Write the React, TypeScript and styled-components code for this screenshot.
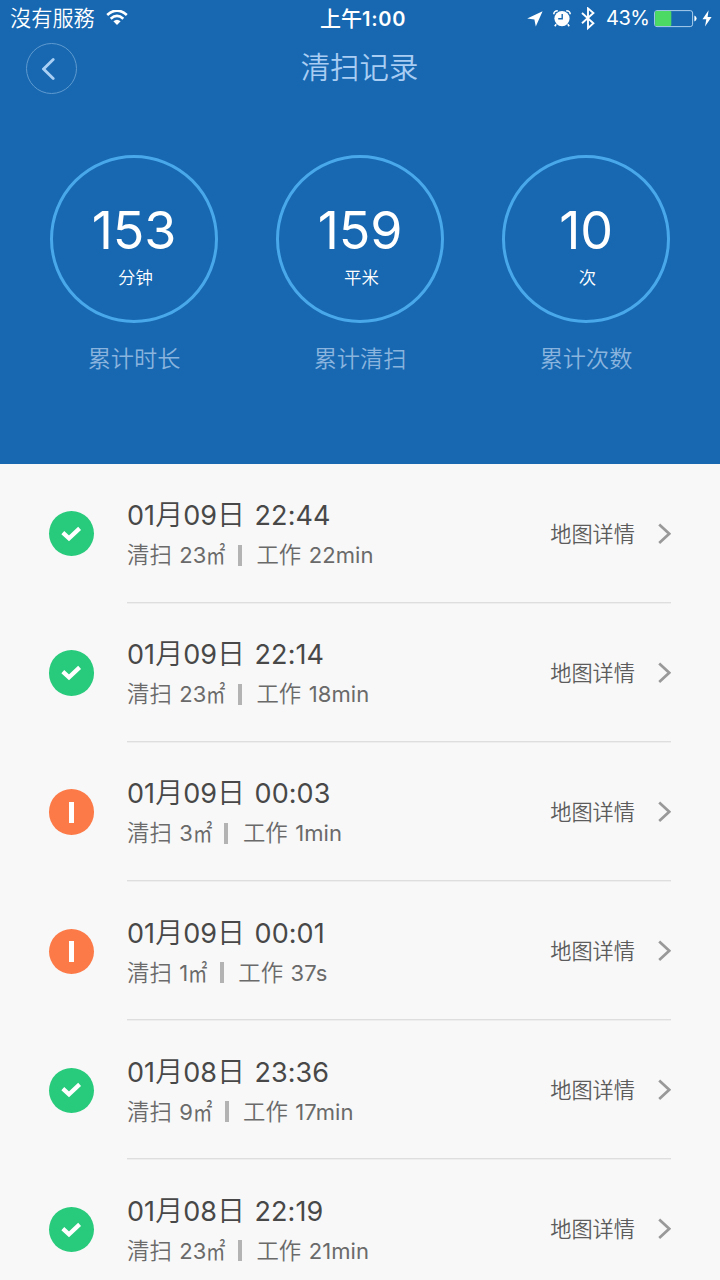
import React from "react";
import styled, { createGlobalStyle } from "styled-components";

const GlobalStyle = createGlobalStyle`
  * { box-sizing: border-box; }
  body {
    margin: 0;
    width: 720px;
    height: 1280px;
    overflow: hidden;
    background: #f8f8f8;
    font-family: Inter, "Noto Sans CJK SC", sans-serif;
  }
`;

const Screen = styled.main`
  width: 720px;
  height: 1280px;
  overflow: hidden;
  display: flex;
  flex-direction: column;
  background: #f8f8f8;
`;

const Header = styled.header`
  flex: none;
  height: 464px;
  background: #1768b1;
  color: #fff;
`;

const StatusBar = styled.div`
  height: 37px;
  padding: 0 8px 0 10px;
  display: grid;
  grid-template-columns: 310px 1fr 190px;
  align-items: center;
`;

const Carrier = styled.div`
  display: flex;
  align-items: center;
  gap: 11px;
  height: 34px;
  font-family: Inter, "Noto Sans CJK TC", sans-serif;
  font-size: 21.2px;
  line-height: 34px;
  font-weight: 350;
`;

const CarrierName = styled.span`
  margin-top: -2px;
`;

const Clock = styled.div`
  height: 36px;
  font-size: 20px;
  line-height: 35px;
  font-weight: 600;
  letter-spacing: 0.75px;
  white-space: nowrap;
`;

const ClockPrefix = styled.span`
  font-weight: 500;
  font-size: 21px;
  letter-spacing: 0;
`;

const StatusIcons = styled.div`
  display: flex;
  align-items: center;
  justify-content: flex-end;
`;

const Percent = styled.span`
  width: 43px;
  margin: 0 5px 0 11px;
  font-size: 20px;
  line-height: 35px;
  height: 36px;
  font-weight: 400;
  letter-spacing: -0.5px;
  white-space: nowrap;
`;

const NavBar = styled.nav`
  height: 63px;
  padding: 0 26px;
  display: grid;
  grid-template-columns: 51px 1fr 51px;
  align-items: center;
`;

const BackButton = styled.button`
  width: 51px;
  height: 51px;
  padding: 0 5px 0 0;
  border: 1px solid #5f9ad0;
  border-radius: 50%;
  background: none;
  display: grid;
  place-items: center;
`;

const Title = styled.h1`
  margin: -1px 0 0 -1px;
  text-align: center;
  font-size: 29.4px;
  line-height: 40px;
  font-weight: 350;
  color: #a9cdf3;
`;

const Stats = styled.section`
  display: grid;
  grid-template-columns: repeat(3, 226px);
  justify-content: center;
  padding-top: 55px;
`;

const Stat = styled.div`
  display: flex;
  flex-direction: column;
  align-items: center;
`;

const Ring = styled.div`
  width: 168px;
  height: 168px;
  border: 3px solid #48a8ea;
  border-radius: 50%;
  display: flex;
  flex-direction: column;
  align-items: center;
  padding-top: 43px;
`;

const StatValue = styled.div`
  font-size: 52px;
  line-height: 60px;
  height: 60px;
  font-weight: 400;
  letter-spacing: -0.2px;
`;

const StatUnit = styled.div`
  margin-top: 4px;
  padding-left: 3px;
  font-size: 17.4px;
  line-height: 26px;
  font-weight: 350;
`;

const StatLabel = styled.div`
  margin-top: 18px;
  font-size: 23.2px;
  line-height: 36px;
  font-weight: 350;
  color: #8ab4de;
`;

const List = styled.ul`
  list-style: none;
  margin: 0;
  padding: 0 49px;
`;

const Row = styled.li`
  height: 139.2px;
  display: grid;
  grid-template-columns: 78px 1fr;
`;

const Badge = styled.span<{ $ok: boolean }>`
  width: 45.4px;
  height: 45.4px;
  margin-top: 47px;
  margin-left: -0.4px;
  border-radius: 50%;
  background: ${(p) => (p.$ok ? "#28ca7b" : "#fc7a48")};
  display: grid;
  place-items: center;
`;

const RowBody = styled.div`
  height: 138.6px;
  display: flex;
  justify-content: space-between;
  border-bottom: 1.6px solid #dedede;
  box-shadow: 0 1px 0 #eeeeee;
`;

const Info = styled.div`
  padding-top: 32px;
  white-space: nowrap;
`;

const DateLine = styled.div`
  font-size: 27px;
  line-height: 38px;
  height: 38px;
  font-weight: 400;
  letter-spacing: 0.05px;
  word-spacing: 1.8px;
  color: #484848;
`;

const DateUnit = styled.span`
  font-size: 28px;
  font-weight: 350;
`;

const Meta = styled.div`
  margin-top: 5px;
  height: 32px;
  display: flex;
  align-items: center;
  font-size: 22px;
  line-height: 32px;
  font-weight: 400;
  letter-spacing: 0.1px;
  color: #6a6a6a;
`;

const Cjk = styled.span`
  font-size: 22.4px;
  font-weight: 350;
  letter-spacing: 0;
  margin-right: 7.4px;
`;

const SquareMeter = styled.span`
  width: 22px;
  font-size: 22px;
  font-weight: 400;
  transform: scale(0.88, 1.08);
  transform-origin: left center;
`;

const Bar = styled.span`
  width: 4px;
  height: 21px;
  margin: 0 14.5px 0 9.6px;
  background: #b3b3b3;
`;

const Detail = styled.a`
  height: 139px;
  display: flex;
  align-items: center;
  gap: 23px;
  font-size: 21.2px;
  font-weight: 350;
  color: #5c5c5c;
`;

const DetailText = styled.span`
  margin: -3px 0 0 0;
`;

const WifiIcon = () => (
  <svg width="22" height="17" viewBox="0 0 22 17" fill="none" stroke="#fff" strokeWidth="2.7">
    <path d="M1.2 5Q11-3.6 20.8 5" />
    <path d="M4.7 8.7Q11 3.1 17.3 8.7" />
    <path d="M11 15L7.4 11.3Q11 8.3 14.6 11.3Z" fill="#fff" stroke="none" />
  </svg>
);

const LocationIcon = () => (
  <svg width="16" height="16" viewBox="0 0 16 16">
    <path d="M15.6.3L.2 7.6 7.4 8.6 8.8 15.4Z" fill="#fff" />
  </svg>
);

const AlarmIcon = () => (
  <svg width="18" height="18" viewBox="0 0 18 18">
    <circle cx="9" cy="8.6" r="7.6" fill="#fff" />
    <path d="M.9 4.2Q.6 1 4.8.8M17.1 4.2Q17.4 1 13.2.8" stroke="#fff" strokeWidth="1.6" fill="none" />
    <path d="M3.2 14.2L1.8 16.2M14.8 14.2L16.2 16.2" stroke="#fff" strokeWidth="1.6" />
    <path d="M9.2 4V8.8H5.2" stroke="#1768b1" strokeWidth="1.4" fill="none" />
  </svg>
);

const BluetoothIcon = () => (
  <svg width="14" height="24" viewBox="0 0 14 24" fill="none" stroke="#fff" strokeWidth="1.9">
    <path d="M1 6L12.4 16.2 7 21.1V1.4L12.4 6 1 16.2" />
  </svg>
);

const BatteryIcon = () => (
  <svg width="43" height="18" viewBox="0 0 43 18">
    <rect x=".6" y=".6" width="38" height="16" rx="2.4" fill="none" stroke="#a9cdec" strokeWidth="1" />
    <rect x="1.1" y="1.1" width="16.2" height="15" rx="1" fill="#4cd964" />
    <path d="M40.4 5.6Q42.6 6.4 42.6 8.6T40.4 11.6Z" fill="#fff" />
  </svg>
);

const BoltIcon = () => (
  <svg width="10" height="18" viewBox="0 0 10 18">
    <path d="M6.6.3L.5 9.2H4.3L3 16.4 9.6 6.9H5.6Z" fill="#fff" />
  </svg>
);

const IconSlot = styled.span<{ $gap: number }>`
  display: flex;
  margin-left: ${(p) => p.$gap}px;
`;

const BackChevron = () => (
  <svg width="14" height="24" viewBox="0 0 14 24">
    <path d="M11.2 2.4L1.6 12 11.2 21.6" fill="none" stroke="#a9cff5" strokeWidth="2.8" strokeLinecap="round" />
  </svg>
);

const CheckIcon = () => (
  <svg width="22" height="18" viewBox="0 0 22 18">
    <path d="M2.8 7.6L9 13.4 19.6 3.4" fill="none" stroke="#fff" strokeWidth="4.2" />
  </svg>
);

const PauseMark = styled.span`
  width: 5px;
  height: 21px;
  background: #fff;
`;

const DetailChevron = () => (
  <svg width="13" height="22" viewBox="0 0 13 22">
    <path d="M1.2 1.6L11.2 10.8 1.2 20" fill="none" stroke="#999" strokeWidth="2.7" />
  </svg>
);

const stats = [
  { value: "153", unit: "分钟", label: "累计时长" },
  { value: "159", unit: "平米", label: "累计清扫" },
  { value: "10", unit: "次", label: "累计次数" },
];

const records = [
  { ok: true, month: "01", day: "09", clock: "22:44", area: "23", time: "22min" },
  { ok: true, month: "01", day: "09", clock: "22:14", area: "23", time: "18min" },
  { ok: false, month: "01", day: "09", clock: "00:03", area: "3", time: "1min" },
  { ok: false, month: "01", day: "09", clock: "00:01", area: "1", time: "37s" },
  { ok: true, month: "01", day: "08", clock: "23:36", area: "9", time: "17min" },
  { ok: true, month: "01", day: "08", clock: "22:19", area: "23", time: "21min" },
];

export default function App() {
  return (
    <Screen>
      <GlobalStyle />
      <Header>
        <StatusBar>
          <Carrier>
            <CarrierName>沒有服務</CarrierName>
            <WifiIcon />
          </Carrier>
          <Clock>
            <ClockPrefix>上午</ClockPrefix>1:00
          </Clock>
          <StatusIcons>
            <IconSlot $gap={0}><LocationIcon /></IconSlot>
            <IconSlot $gap={10}><AlarmIcon /></IconSlot>
            <IconSlot $gap={10}><BluetoothIcon /></IconSlot>
            <Percent>43%</Percent>
            <BatteryIcon />
            <IconSlot $gap={5}><BoltIcon /></IconSlot>
          </StatusIcons>
        </StatusBar>
        <NavBar>
          <BackButton aria-label="返回"><BackChevron /></BackButton>
          <Title>清扫记录</Title>
        </NavBar>
        <Stats>
          {stats.map((s) => (
            <Stat key={s.label}>
              <Ring>
                <StatValue>{s.value}</StatValue>
                <StatUnit>{s.unit}</StatUnit>
              </Ring>
              <StatLabel>{s.label}</StatLabel>
            </Stat>
          ))}
        </Stats>
      </Header>
      <List>
        {records.map((r) => (
          <Row key={r.day + r.clock}>
            <Badge $ok={r.ok}>{r.ok ? <CheckIcon /> : <PauseMark />}</Badge>
            <RowBody>
              <Info>
                <DateLine>
                  {r.month}
                  <DateUnit>月</DateUnit>
                  {r.day}
                  <DateUnit>日</DateUnit> {r.clock}
                </DateLine>
                <Meta>
                  <Cjk>清扫</Cjk>
                  {r.area}
                  <SquareMeter>㎡</SquareMeter>
                  <Bar />
                  <Cjk>工作</Cjk>
                  {r.time}
                </Meta>
              </Info>
              <Detail>
                <DetailText>地图详情</DetailText>
                <DetailChevron />
              </Detail>
            </RowBody>
          </Row>
        ))}
      </List>
    </Screen>
  );
}
